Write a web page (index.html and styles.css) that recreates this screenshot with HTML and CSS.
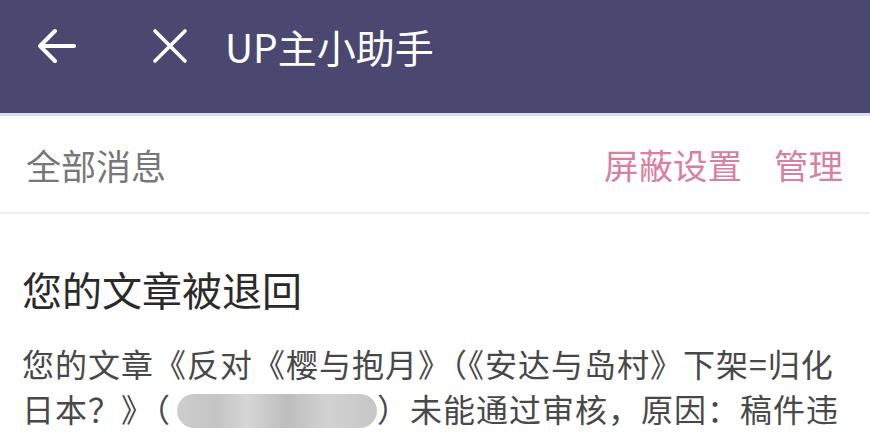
FILE: index.html
```html
<!DOCTYPE html>
<html lang="zh-CN">
<head>
    <meta charset="UTF-8">
    <meta name="viewport" content="width=device-width, initial-scale=1.0">
    <title>UP主小助手</title>
    <link rel="stylesheet" href="styles.css">
</head>
<body>
    <header class="top-bar">
        <a class="bar-icon back" href="#">
            <svg width="40" height="36" viewBox="0 0 40 36">
                <path d="M38 18H5M19 3L4 18l15 15" fill="none" stroke="#fff" stroke-width="4" stroke-linecap="round" stroke-linejoin="round"/>
            </svg>
        </a>
        <a class="bar-icon close" href="#">
            <svg width="36" height="36" viewBox="0 0 36 36">
                <path d="M3 3l30 30M33 3L3 33" fill="none" stroke="#fff" stroke-width="3.6" stroke-linecap="round"/>
            </svg>
        </a>
        <h1 class="bar-title">UP主小助手</h1>
    </header>

    <nav class="tab-row">
        <span class="tab-name">全部消息</span>
        <div class="tab-actions">
            <a href="#">屏蔽设置</a>
            <a href="#">管理</a>
        </div>
    </nav>

    <main class="message">
        <h2 class="message-title">您的文章被退回</h2>
        <p class="message-body">您的文章《反对《樱与抱月》（《安达与岛村》下架=归化日本？》（<span class="blurred"></span>）未能通过审核，原因：稿件违反相关规定，已被退回，请修改后重新提交。</p>
    </main>
</body>
</html>
```

FILE: styles.css
```css
body {
    margin: 0;
    padding: 0;
    font-family: "Noto Sans CJK SC", "Noto Sans", sans-serif;
    background: #fff;
    overflow: hidden;
}

.top-bar {
    height: 116px;
    box-sizing: border-box;
    background: #4a4870;
    border-bottom: 3px solid #dcdcf0;
    display: flex;
    align-items: center;
    padding-bottom: 22px;
}

.bar-icon {
    display: flex;
    align-items: center;
}

.bar-icon.back {
    margin-left: 36px;
}

.bar-icon.close {
    margin-left: 76px;
}

.bar-title {
    margin: 0 0 0 37px;
    font-size: 39px;
    font-weight: normal;
    color: #fff;
}

.tab-row {
    height: 96px;
    display: flex;
    align-items: center;
    justify-content: space-between;
    padding: 0 27px 0 26px;
    border-bottom: 2px solid #efefef;
}

.tab-name {
    font-size: 35px;
    color: #777;
}

.tab-actions {
    display: flex;
    gap: 32px;
}

.tab-actions a {
    font-size: 34.5px;
    color: #d97fa2;
    text-decoration: none;
}

.message {
    padding: 0 22px;
}

.message-title {
    margin: 49px 0 0 0;
    font-size: 40px;
    font-weight: normal;
    color: #2a2a2a;
    line-height: 52px;
}

.message-body {
    margin: 26px 0 0 0;
    font-size: 32px;
    letter-spacing: 1px;
    line-height: 45px;
    color: #484848;
}

.blurred {
    display: inline-block;
    width: 200px;
    height: 34px;
    margin-left: 6px;
    vertical-align: -6px;
    border-radius: 17px;
    background: linear-gradient(to right, #cdcdcd 0%, #c4c4c4 20%, #d6d6d6 35%, #bdbdbd 55%, #d2d2d2 75%, #c6c6c6 100%);
}
```
